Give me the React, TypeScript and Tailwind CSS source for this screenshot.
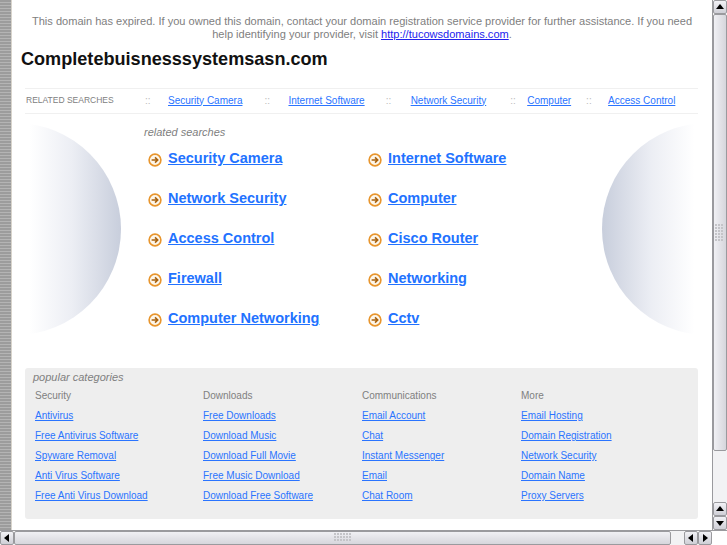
import React from "react";

const related = [
  ["Security Camera", "Internet Software"],
  ["Network Security", "Computer"],
  ["Access Control", "Cisco Router"],
  ["Firewall", "Networking"],
  ["Computer Networking", "Cctv"],
];

const categories = [
  { title: "Security", cls: "w-[168px]", links: ["Antivirus", "Free Antivirus Software", "Spyware Removal", "Anti Virus Software", "Free Anti Virus Download"] },
  { title: "Downloads", cls: "w-[159px]", links: ["Free Downloads", "Download Music", "Download Full Movie", "Free Music Download", "Download Free Software"] },
  { title: "Communications", cls: "w-[159px]", links: ["Email Account", "Chat", "Instant Messenger", "Email", "Chat Room"] },
  { title: "More", cls: "w-[150px]", links: ["Email Hosting", "Domain Registration", "Network Security", "Domain Name", "Proxy Servers"] },
];

const topLinks = [
  { label: "Security Camera", sep: "ml-[31px] mr-[17px]" },
  { label: "Internet Software", sep: "ml-[22px] mr-[18px]" },
  { label: "Network Security", sep: "ml-[21px] mr-[19px]" },
  { label: "Computer", sep: "ml-[24px] mr-[11px]" },
  { label: "Access Control", sep: "ml-[15px] mr-[16px]" },
];

const ArrowIcon = () => (
  <svg width="14" height="14" viewBox="0 0 14 14" className="shrink-0 mt-[2px]">
    <circle cx="7" cy="7" r="5.9" fill="#fdf6ea" stroke="#e8952c" strokeWidth="1.6" />
    <path d="M3.6 7h6M7 4.4 9.7 7 7 9.6" fill="none" stroke="#a8620f" strokeWidth="1.6" />
  </svg>
);

const Bubble = ({ flip }: { flip?: boolean }) => (
  <svg width="110" height="212" viewBox="0 0 110 212" className="shrink-0">
    <defs>
      <linearGradient
        id={flip ? "bubbleR" : "bubbleL"}
        gradientUnits="userSpaceOnUse"
        x1={flip ? 110 : 0}
        x2={flip ? 0 : 109}
        y1="0"
        y2="0"
      >
        <stop offset="0.16" stopColor="#ffffff" />
        <stop offset="0.55" stopColor="#eceef4" />
        <stop offset="1" stopColor="#c8cedc" />
      </linearGradient>
    </defs>
    <circle cx={flip ? 106 : 3} cy="106" r="106" fill={`url(#${flip ? "bubbleR" : "bubbleL"})`} />
  </svg>
);

const Grip = ({ w, h }: { w: number; h: number }) => (
  <svg width={w} height={h} className="shrink-0">
    {Array.from({ length: Math.floor(h / 3) }).map((_, r) =>
      Array.from({ length: Math.floor(w / 3) }).map((_, c) => (
        <rect key={`${r}-${c}`} x={c * 3} y={r * 3} width="2" height="2" fill="#c4c4c8" />
      ))
    )}
  </svg>
);

const ScrollBtn = ({ dir }: { dir: "up" | "down" | "left" | "right" }) => {
  const pts = { up: "1,7 9,7 5,2", down: "1,3 9,3 5,8", left: "7,1 7,9 2,5", right: "3,1 3,9 8,5" }[dir];
  return (
    <div className="w-[14px] h-[14px] shrink-0 flex items-center justify-center rounded-[2px] border border-[#9a9a9e] bg-gradient-to-b from-[#f2f2f6] to-[#cfcfd6]">
      <svg width="10" height="10" viewBox="0 0 10 10">
        <polygon points={pts} fill="#000" />
      </svg>
    </div>
  );
};

export default function App() {
  return (
    <div className="w-[727px] h-[545px] overflow-hidden flex flex-col bg-white font-['Liberation_Sans',Arial,sans-serif]">
      <div className="flex h-[530px]">
        <div className="w-[12px] shrink-0 border-r border-[#d8d4cc] bg-[repeating-linear-gradient(to_bottom,#9c9c9c_0px,#9c9c9c_2px,#b4b4b4_2px,#b4b4b4_3px)]" />

        <div className="w-[700px] shrink-0 overflow-hidden">
          <p className="mt-[15px] px-[15px] text-center text-[11.05px] leading-[13px] text-[#808080]">
            This domain has expired. If you owned this domain, contact your domain registration service provider for further assistance. If you need help identifying your provider, visit{" "}
            <a href="#" className="text-[#2222ee] underline">http://tucowsdomains.com</a>.
          </p>
          <h1 className="ml-[9px] mt-[7px] text-[18.1px] leading-[22px] font-bold text-[#111]">Completebuisnesssystemsasn.com</h1>

          <div className="ml-[13px] mr-[14px] mt-[18px] h-[26px] pb-[2px] flex items-center border-y border-[#f0f0f0] text-[10px] text-[#808080]">
            <span className="ml-px text-[8.5px] w-[88px] whitespace-nowrap">RELATED SEARCHES</span>
            {topLinks.map((item) => (
              <React.Fragment key={item.label}>
                <span className={`w-[6px] text-[#bbb] ${item.sep}`}>::</span>
                <a href="#" className="whitespace-nowrap text-[#2a74ff] underline">{item.label}</a>
              </React.Fragment>
            ))}
          </div>

          <div className="flex mt-[9px]">
            <Bubble />
            <div className="w-[480px] shrink-0">
              <div className="ml-[22px] text-[11px] leading-[18px] italic text-[#808080]">related searches</div>
              <div className="ml-[26px] mt-[7px] grid grid-cols-[220px_1fr] gap-y-[18px]">
                {related.flat().map((label) => (
                  <div key={label} className="flex items-center gap-[6px] h-[22px]">
                    <ArrowIcon />
                    <a href="#" className="whitespace-nowrap text-[14.5px] font-bold text-[#2272ff] underline">{label}</a>
                  </div>
                ))}
              </div>
            </div>
            <Bubble flip />
          </div>

          <div className="ml-[13px] mr-[14px] mt-[33px] h-[151px] rounded-[3px] bg-[#eeeeee] pt-[3px]">
            <div className="ml-[8px] text-[11px] leading-[13px] italic text-[#808080]">popular categories</div>
            <div className="flex ml-[10px] mt-[2px]">
              {categories.map((col) => (
                <div key={col.title} className={`${col.cls} shrink-0 flex flex-col text-[10px] leading-[20px]`}>
                  <div className="text-[#808080]">{col.title}</div>
                  {col.links.map((l) => (
                    <a key={l} href="#" className="whitespace-nowrap text-[#2a74ff] underline">{l}</a>
                  ))}
                </div>
              ))}
            </div>
          </div>
        </div>

        <div className="w-[15px] shrink-0 flex flex-col border-l border-[#9a9a9e]">
          <ScrollBtn dir="up" />
          <div className="h-[437px] shrink-0 flex items-center justify-center border border-[#9a9a9e] rounded-[2px] bg-gradient-to-r from-[#f0f0f4] to-[#d6d6dc]">
            <Grip w={11} h={18} />
          </div>
          <div className="flex-1 bg-[#f2f2f4]" />
          <ScrollBtn dir="up" />
          <ScrollBtn dir="down" />
        </div>
      </div>

      <div className="h-[15px] flex items-stretch border-t border-[#9a9a9e]">
        <ScrollBtn dir="left" />
        <div className="w-[657px] shrink-0 flex items-center justify-center border border-[#9a9a9e] rounded-[2px] bg-gradient-to-b from-[#f0f0f4] to-[#d6d6dc]">
          <Grip w={18} h={11} />
        </div>
        <div className="flex-1 bg-[#f2f2f4]" />
        <ScrollBtn dir="left" />
        <ScrollBtn dir="right" />
        <div className="w-[15px] shrink-0 bg-white" />
      </div>
    </div>
  );
}
